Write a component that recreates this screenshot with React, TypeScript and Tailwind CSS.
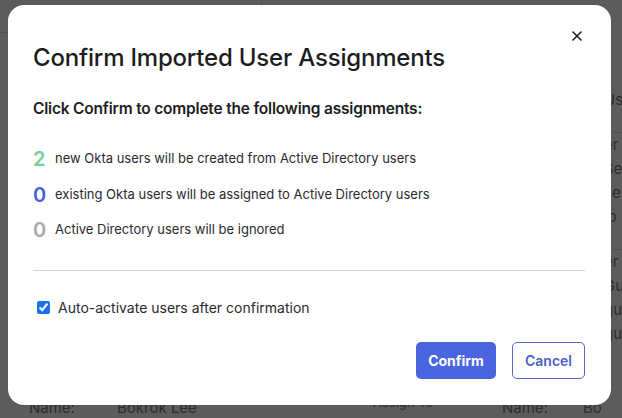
import { X } from "lucide-react";

const rows = [
  { n: "2", color: "text-[#7ccf9a]", text: "new Okta users will be created from Active Directory users" },
  { n: "0", color: "text-[#4b5fd4]", text: "existing Okta users will be assigned to Active Directory users" },
  { n: "0", color: "text-[#a9a9a9]", text: "Active Directory users will be ignored" },
];

export default function App() {
  return (
    <div className="relative w-[622px] h-[418px] overflow-hidden bg-[#5c5c5c] font-['Inter',sans-serif]">
      {/* dimmed page behind the dialog */}
      <div className="flex flex-col h-full text-[#2c2c2c]">
        <div className="flex flex-1 min-h-0 overflow-hidden">
          <div className="w-[262px] border-r border-[#505050]">
            <div className="h-[33px] border-b border-[#505050]" />
          </div>
          <div className="flex-1" />
          <div className="w-[18px] flex flex-col text-[15px] leading-[24px] pt-[88px] whitespace-nowrap overflow-hidden">
            <span>Us</span>
            <span className="border-t border-[#505050] mt-[20px]">er</span>
            <span>Se</span>
            <span>se</span>
            <span>jo</span>
            <span className="border-t border-[#505050] mt-[20px]">er</span>
            <span>Gu</span>
            <span>gu</span>
            <span>gu</span>
          </div>
        </div>
        <div className="flex h-[19px] leading-[18px] text-[15px] pb-[1px]">
          <span className="ml-[29px] w-[88px]">Name:</span>
          <span className="w-[256px]">Bokrok Lee</span>
          <span className="w-[129px] text-[13px] -mt-[6px]">Assign To</span>
          <span className="w-[81px]">Name:</span>
          <span>Bo</span>
        </div>
      </div>

      <div className="absolute left-[8px] top-[5px] w-[603px] h-[400px] rounded-[16px] bg-white pl-[25px] pr-[26px] pt-[38px]">
        <button className="absolute right-[26px] top-[23px] text-[#1d1d1d]">
          <X size={16} strokeWidth={2.4} />
        </button>
        <h2 className="text-[24px] leading-[30px] font-medium text-[#1d1d21] tracking-[-0.2px]">
          Confirm Imported User Assignments
        </h2>
        <p className="mt-[26px] text-[15.5px] leading-[20px] font-semibold text-[#1d1d21] tracking-[-0.2px]">
          Click Confirm to complete the following assignments:
        </p>
        <div className="mt-[28px] flex flex-col gap-[11.5px]">
          {rows.map((r, i) => (
            <div key={i} className="flex items-center h-[24px]">
              <span className={`w-[13px] text-[20px] font-semibold ${r.color}`}>{r.n}</span>
              <span className="ml-[9px] text-[13px] text-[#2a2a2e]">{r.text}</span>
            </div>
          ))}
        </div>
        <div className="mt-[28px] border-t border-[#cfcfcf]" />
        <label className="mt-[26px] ml-[4px] flex items-center gap-[8px] text-[14px] text-[#2a2a2e]">
          <input type="checkbox" defaultChecked className="w-[13px] h-[13px] accent-[#1a73e8]" />
          Auto-activate users after confirmation
        </label>
        <div className="mt-[24px] flex justify-end gap-[16px]">
          <button className="w-[80px] h-[37px] rounded-[5px] bg-[#4b65e0] text-white text-[14px] font-bold">
            Confirm
          </button>
          <button className="w-[73px] h-[37px] rounded-[5px] border border-[#5866c4] text-[#4f5fc4] text-[14px] font-semibold">
            Cancel
          </button>
        </div>
      </div>
    </div>
  );
}
